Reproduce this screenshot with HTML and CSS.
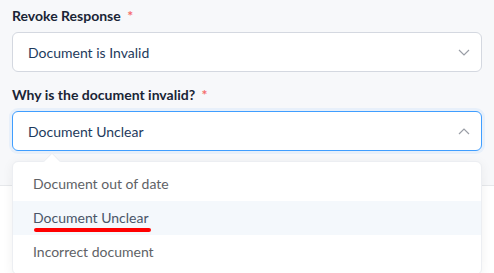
FILE: index.html
```html
<!DOCTYPE html>
<html lang="en">
<head>
    <meta charset="UTF-8">
    <meta name="viewport" content="width=device-width, initial-scale=1.0">
    <title>Revoke Response</title>
    <link rel="stylesheet" href="styles.css">
</head>
<body>
    <div class="form-panel">
        <div class="form-item">
            <label class="form-label">Revoke Response <span class="req">*</span></label>
            <div class="select">
                <span class="select-value">Document is Invalid</span>
                <svg class="chevron" width="12" height="7" viewBox="0 0 12 7"><path d="M1 1l5 5 5-5" fill="none" stroke="currentColor" stroke-width="1.2"/></svg>
            </div>
        </div>
        <div class="form-item open">
            <label class="form-label">Why is the document invalid? <span class="req">*</span></label>
            <div class="select is-focus">
                <span class="select-value">Document Unclear</span>
                <svg class="chevron" width="12" height="7" viewBox="0 0 12 7"><path d="M1 6l5-5 5 5" fill="none" stroke="currentColor" stroke-width="1.2"/></svg>
            </div>
            <div class="dropdown">
                <div class="dropdown-arrow"></div>
                <ul class="dropdown-list">
                    <li class="dropdown-item">Document out of date</li>
                    <li class="dropdown-item hover"><span class="marked">Document Unclear</span></li>
                    <li class="dropdown-item">Incorrect document</li>
                </ul>
            </div>
        </div>
    </div>
    <div class="page-rest"></div>
</body>
</html>
```

FILE: styles.css
```css
* { margin: 0; padding: 0; box-sizing: border-box; }
html, body { height: 100%; }
body { font-family: Lato, "Open Sans", sans-serif; background: #fff; color: #1f2d3d; display: flex; flex-direction: column; min-height: 273px; }
.form-panel { background: #f7f8fa; padding: 6px 12px 21px; border-bottom: 1px solid #e6e8eb; position: relative; z-index: 2; }
.page-rest { flex-grow: 1; background: #fff; }
.form-item { position: relative; margin-bottom: 13px; }
.form-label { display: block; font-size: 14px; font-weight: 700; line-height: 20px; margin-bottom: 6px; color: #1a2536; }
.req { color: #f56c6c; margin-left: 3px; }
.select { height: 40px; background: #fff; border: 1px solid #d4d8e0; border-radius: 6px; display: flex; align-items: center; justify-content: space-between; padding: 0 11px 0 15px; }
.select.is-focus { border-color: #409eff; box-shadow: 0 0 0 3px rgba(64, 158, 255, 0.08); }
.select-value { font-size: 14px; color: #1e3a5c; }
.chevron { color: #9a9ea6; }
.dropdown { position: absolute; top: 76px; left: 0; right: 0; z-index: 10; }
.dropdown-list { list-style: none; background: #fff; border: 1px solid #eceef2; border-radius: 6px; padding: 5px 0; box-shadow: 0 2px 12px rgba(0, 0, 0, 0.06); }
.dropdown-arrow { position: absolute; top: -6px; left: 34px; width: 12px; height: 12px; background: #fff; border-left: 1px solid #eceef2; border-top: 1px solid #eceef2; transform: rotate(45deg); }
.dropdown-item { font-size: 14px; color: #606266; height: 34px; line-height: 34px; padding: 0 20px; }
.dropdown-item.hover { background: #f4f8fc; color: #4a5568; }
.marked { position: relative; display: inline-block; }
.marked::after { content: ""; position: absolute; left: 1px; right: -2px; bottom: 3px; height: 4px; border-radius: 2px; background: #f00; }
```
